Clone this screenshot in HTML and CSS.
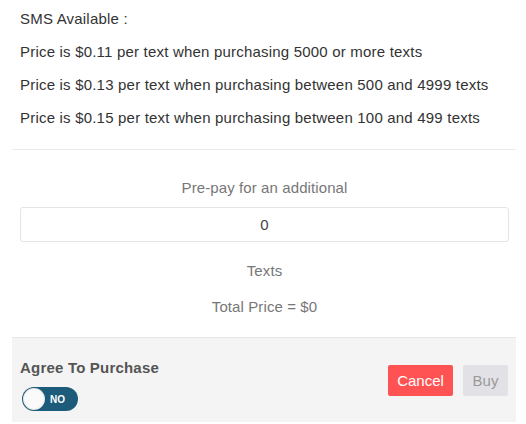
FILE: index.html
```html
<!DOCTYPE html>
<html lang="en">
<head>
  <meta charset="UTF-8">
  <meta name="viewport" content="width=device-width, initial-scale=1.0">
  <title>Buy SMS</title>
  <link rel="stylesheet" href="styles.css">
</head>
<body>
  <div class="panel">
    <!-- Rates -->
    <div class="rates">
      <p>SMS Available :</p>
      <p>Price is $0.11 per text when purchasing 5000 or more texts</p>
      <p>Price is $0.13 per text when purchasing between 500 and 4999 texts</p>
      <p>Price is $0.15 per text when purchasing between 100 and 499 texts</p>
    </div>

    <!-- Pre-pay form -->
    <div class="purchase">
      <label for="qty" class="note">Pre-pay for an additional</label>
      <input type="text" id="qty" name="qty" value="0" aria-label="Texts to buy">
      <p class="note texts">Texts</p>
      <p class="note total">Total Price = $0</p>
    </div>

    <!-- Footer -->
    <div class="footer">
      <div class="agree">
        <span class="agree-label">Agree To Purchase</span>
        <div class="toggle">
          <span class="knob"></span>
          <span class="toggle-text">NO</span>
        </div>
      </div>
      <div class="actions">
        <button type="button" class="cancel-button">Cancel</button>
        <button type="button" class="buy-button" disabled>Buy</button>
      </div>
    </div>
  </div>
</body>
</html>
```

FILE: styles.css
```css
body {
  font-family: "Liberation Sans", Arial, sans-serif;
  background-color: #fff;
  color: #333;
  margin: 0;
  padding: 0;
}
.panel {
  width: 504px;
  margin-left: 12px;
}
.rates {
  padding: 9px 8px 21px;
  border-bottom: 1px solid #ebebeb;
}
.rates p {
  margin: 0 0 13px;
  font-size: 15px;
  letter-spacing: 0.2px;
  line-height: 20px;
}
.rates p:last-child {
  margin-bottom: 0;
}
.purchase {
  padding: 28px 7px 20px 8px;
  display: flex;
  flex-direction: column;
  align-items: center;
}
.note {
  display: block;
  margin: 0;
  font-size: 15px;
  letter-spacing: 0.1px;
  line-height: 20px;
  color: #777;
  font-weight: 300;
}
.purchase input {
  width: 100%;
  box-sizing: border-box;
  height: 35px;
  margin: 9px 0 0;
  border: 1px solid #e4e4e4;
  border-radius: 3px;
  text-align: center;
  font-family: inherit;
  font-size: 15px;
  color: #444;
}
.texts {
  margin-top: 19px;
}
.total {
  margin-top: 16px;
}
.footer {
  background-color: #f4f4f4;
  border-top: 1px solid #e6e6e6;
  padding: 20px 8px 11px 8px;
  display: flex;
  justify-content: space-between;
  align-items: flex-start;
}
.agree-label {
  display: block;
  font-size: 15px;
  letter-spacing: 0.2px;
  line-height: 20px;
  font-weight: bold;
  color: #555;
}
.toggle {
  margin: 9px 0 0 2px;
  width: 56px;
  height: 24px;
  border-radius: 12px;
  background-color: #1d5b7b;
  display: flex;
  align-items: center;
  box-sizing: border-box;
  padding: 1px;
}
.knob {
  width: 22px;
  height: 22px;
  border-radius: 50%;
  background-color: #fafafa;
  box-shadow: inset 0 0 2px rgba(0, 0, 0, 0.25);
}
.toggle-text {
  margin-left: 5px;
  font-size: 10px;
  font-weight: bold;
  color: #fff;
}
.actions {
  display: flex;
  gap: 10px;
  margin-top: 7px;
}
.actions button {
  height: 31px;
  border: none;
  border-radius: 2px;
  font-family: inherit;
  font-size: 15px;
  padding: 0;
}
.cancel-button {
  width: 65px;
  background-color: #ff5353;
  color: #fff;
  cursor: pointer;
}
.buy-button {
  width: 45px;
  background-color: #e2e2e6;
  color: #999;
}
```
